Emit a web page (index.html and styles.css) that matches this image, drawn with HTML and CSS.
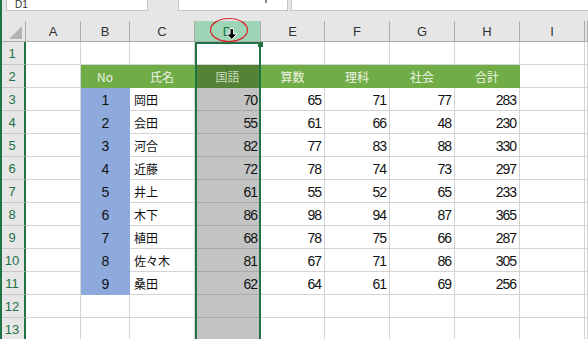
FILE: index.html
```html
<!DOCTYPE html>
<html lang="ja">
    <head>
        <meta charset="UTF-8" />
        <meta name="viewport" content="width=device-width, initial-scale=1.0" />
        <title>列の選択</title>
        <link rel="stylesheet" href="styles.css">
    </head>
    <body>
        <div class="app">
            <div class="topbar">
                <div class="namebox"><span>D1</span></div>
                <div class="fxbox"><span class="drop"></span></div>
                <div class="formula"></div>
            </div>

            <div class="sheet">
                <div class="row head">
                    <div class="corner"><span class="tri"></span></div>
                    <div class="ch">A</div>
                    <div class="ch">B</div>
                    <div class="ch">C</div>
                    <div class="ch sel">D</div>
                    <div class="ch">E</div>
                    <div class="ch">F</div>
                    <div class="ch">G</div>
                    <div class="ch">H</div>
                    <div class="ch">I</div>
                    <div class="ch"></div>
                </div>

                <div class="row">
                    <div class="rh">1</div>
                    <div class="c"></div><div class="c"></div><div class="c"></div>
                    <div class="c active"></div>
                    <div class="c"></div><div class="c"></div><div class="c"></div><div class="c"></div><div class="c"></div><div class="c"></div>
                </div>

                <div class="row">
                    <div class="rh">2</div>
                    <div class="c"></div>
                    <div class="c th">No</div>
                    <div class="c th">氏名</div>
                    <div class="c th th-sel">国語</div>
                    <div class="c th">算数</div>
                    <div class="c th">理科</div>
                    <div class="c th">社会</div>
                    <div class="c th">合計</div>
                    <div class="c"></div><div class="c"></div>
                </div>

                <div class="row">
                    <div class="rh">3</div>
                    <div class="c"></div>
                    <div class="c no">1</div>
                    <div class="c name">岡田</div>
                    <div class="c num gray">70</div>
                    <div class="c num">65</div>
                    <div class="c num">71</div>
                    <div class="c num">77</div>
                    <div class="c num">283</div>
                    <div class="c"></div><div class="c"></div>
                </div>

                <div class="row">
                    <div class="rh">4</div>
                    <div class="c"></div>
                    <div class="c no">2</div>
                    <div class="c name">会田</div>
                    <div class="c num gray">55</div>
                    <div class="c num">61</div>
                    <div class="c num">66</div>
                    <div class="c num">48</div>
                    <div class="c num">230</div>
                    <div class="c"></div><div class="c"></div>
                </div>

                <div class="row">
                    <div class="rh">5</div>
                    <div class="c"></div>
                    <div class="c no">3</div>
                    <div class="c name">河合</div>
                    <div class="c num gray">82</div>
                    <div class="c num">77</div>
                    <div class="c num">83</div>
                    <div class="c num">88</div>
                    <div class="c num">330</div>
                    <div class="c"></div><div class="c"></div>
                </div>

                <div class="row">
                    <div class="rh">6</div>
                    <div class="c"></div>
                    <div class="c no">4</div>
                    <div class="c name">近藤</div>
                    <div class="c num gray">72</div>
                    <div class="c num">78</div>
                    <div class="c num">74</div>
                    <div class="c num">73</div>
                    <div class="c num">297</div>
                    <div class="c"></div><div class="c"></div>
                </div>

                <div class="row">
                    <div class="rh">7</div>
                    <div class="c"></div>
                    <div class="c no">5</div>
                    <div class="c name">井上</div>
                    <div class="c num gray">61</div>
                    <div class="c num">55</div>
                    <div class="c num">52</div>
                    <div class="c num">65</div>
                    <div class="c num">233</div>
                    <div class="c"></div><div class="c"></div>
                </div>

                <div class="row">
                    <div class="rh">8</div>
                    <div class="c"></div>
                    <div class="c no">6</div>
                    <div class="c name">木下</div>
                    <div class="c num gray">86</div>
                    <div class="c num">98</div>
                    <div class="c num">94</div>
                    <div class="c num">87</div>
                    <div class="c num">365</div>
                    <div class="c"></div><div class="c"></div>
                </div>

                <div class="row">
                    <div class="rh">9</div>
                    <div class="c"></div>
                    <div class="c no">7</div>
                    <div class="c name">植田</div>
                    <div class="c num gray">68</div>
                    <div class="c num">78</div>
                    <div class="c num">75</div>
                    <div class="c num">66</div>
                    <div class="c num">287</div>
                    <div class="c"></div><div class="c"></div>
                </div>

                <div class="row">
                    <div class="rh">10</div>
                    <div class="c"></div>
                    <div class="c no">8</div>
                    <div class="c name">佐々木</div>
                    <div class="c num gray">81</div>
                    <div class="c num">67</div>
                    <div class="c num">71</div>
                    <div class="c num">86</div>
                    <div class="c num">305</div>
                    <div class="c"></div><div class="c"></div>
                </div>

                <div class="row">
                    <div class="rh">11</div>
                    <div class="c"></div>
                    <div class="c no">9</div>
                    <div class="c name">桑田</div>
                    <div class="c num gray">62</div>
                    <div class="c num">64</div>
                    <div class="c num">61</div>
                    <div class="c num">69</div>
                    <div class="c num">256</div>
                    <div class="c"></div><div class="c"></div>
                </div>

                <div class="row">
                    <div class="rh">12</div>
                    <div class="c"></div><div class="c"></div><div class="c"></div>
                    <div class="c gray"></div>
                    <div class="c"></div><div class="c"></div><div class="c"></div><div class="c"></div><div class="c"></div><div class="c"></div>
                </div>

                <div class="row">
                    <div class="rh">13</div>
                    <div class="c"></div><div class="c"></div><div class="c"></div>
                    <div class="c gray"></div>
                    <div class="c"></div><div class="c"></div><div class="c"></div><div class="c"></div><div class="c"></div><div class="c"></div>
                </div>
            </div>

            <!-- 列Dの選択枠 -->
            <div class="selection"><span class="handle"></span></div>

            <!-- マウスカーソルと赤丸 -->
            <svg class="mark" width="50" height="32" viewBox="0 0 50 32">
                <ellipse cx="25" cy="15" rx="18.5" ry="11.5" fill="none" stroke="#e0202a" stroke-width="1.2" />
                <path d="M26 13.5 h3.5 v5.5 h3.5 l-5.25 5.5 l-5.25 -5.5 h3.5 z" fill="#000" stroke="#fff" stroke-width="1" stroke-linejoin="miter" />
            </svg>
        </div>
    </body>
</html>
```

FILE: styles.css
```css
:root {
    --grid: #d4d4d4;
    --head-bg: #e6e6e6;
    --head-line: #ababab;
    --excel-green: #217346;
    --table-green: #70ad47;
    --table-green-dark: #548235;
    --blue: #8ea9db;
    --gray: #c3c3c3;
    --gray-line: #a9a9a9;
    --text: #111;
}

* {
    margin: 0;
    padding: 0;
    box-sizing: border-box;
}

body {
    font-family: "Liberation Sans", "Noto Sans CJK JP", sans-serif;
    background-color: #fff;
    color: var(--text);
    overflow: hidden;
}

.app {
    position: relative;
    width: 588px;
    height: 339px;
    overflow: hidden;
}

.app::after {
    content: "";
    position: absolute;
    left: 0;
    top: 0;
    bottom: 0;
    width: 2px;
    background-color: var(--excel-green);
}

/* 名前ボックスと数式バー */
.topbar {
    display: flex;
    height: 21px;
    padding-left: 6px;
    background-color: var(--head-bg);
}

.namebox,
.fxbox,
.formula {
    height: 11px;
    background-color: #fff;
    border: 1px solid #c6c6c6;
    border-top: none;
    overflow: hidden;
    display: flex;
    align-items: center;
}

.namebox {
    width: 142px;
    padding-left: 8px;
    font-size: 10px;
    color: #333;
}

.namebox span {
    line-height: 10px;
}

.fxbox {
    width: 110px;
    margin-left: 30px;
    position: relative;
}

.drop {
    position: absolute;
    left: 86px;
    top: 0;
    width: 2px;
    height: 3px;
    background-color: #888;
}

.formula {
    flex: 1;
    margin-left: 3px;
    border-right: none;
}

/* シート */
.row {
    display: grid;
    grid-template-columns: 26px 55px 49px 65px 66px 64px 65px 65px 65px 65px 1fr;
    height: 23px;
}

.row.head {
    height: 21px;
    background-color: var(--head-bg);
}

.corner {
    position: relative;
    border-right: 1px solid var(--head-line);
    border-bottom: 1px solid var(--head-line);
}

.tri {
    position: absolute;
    right: 3px;
    bottom: 2px;
    width: 0;
    height: 0;
    border-left: 13px solid transparent;
    border-bottom: 13px solid #b4b4b4;
}

.ch {
    display: flex;
    align-items: center;
    justify-content: center;
    font-size: 13px;
    color: #333;
    border-right: 1px solid var(--head-line);
    border-bottom: 1px solid var(--head-line);
    padding-top: 1px;
}

.ch.sel {
    background-color: #9fd5b7;
    color: var(--excel-green);
}

.rh {
    display: flex;
    align-items: center;
    justify-content: center;
    font-size: 13px;
    color: var(--excel-green);
    background-color: var(--head-bg);
    border-right: 2px solid var(--excel-green);
    border-bottom: 1px solid #c8c8c8;
    padding-top: 1px;
}

.c {
    border-right: 1px solid var(--grid);
    border-bottom: 1px solid var(--grid);
    font-size: 14px;
    line-height: 22px;
    padding-top: 1px;
    white-space: nowrap;
    overflow: hidden;
}

.c.active {
    background-color: #fff;
}

.th {
    background-color: var(--table-green);
    border-color: var(--table-green);
    color: #eef2e4;
    font-family: "Noto Sans CJK JP", sans-serif;
    font-size: 12px;
    text-align: center;
}

.th.th-sel {
    background-color: var(--table-green-dark);
    border-color: var(--table-green-dark);
    color: #c9d9bd;
}

.no {
    background-color: var(--blue);
    border-color: var(--blue);
    text-align: center;
    letter-spacing: -1px;
}

.name {
    font-family: "Noto Sans CJK JP", sans-serif;
    font-size: 12px;
    padding-left: 4px;
}

.num {
    text-align: right;
    padding-right: 3px;
    letter-spacing: -1px;
}

.gray {
    background-color: var(--gray);
    border-bottom-color: var(--gray-line);
    border-right-color: var(--gray);
}

/* 選択枠・カーソル */
.selection {
    position: absolute;
    left: 195px;
    top: 42px;
    width: 66px;
    bottom: -4px;
    border: 2px solid var(--excel-green);
}

.handle {
    position: absolute;
    right: -4px;
    top: -2px;
    width: 5px;
    height: 5px;
    background-color: var(--excel-green);
}

.mark {
    position: absolute;
    left: 204px;
    top: 15px;
}
```
